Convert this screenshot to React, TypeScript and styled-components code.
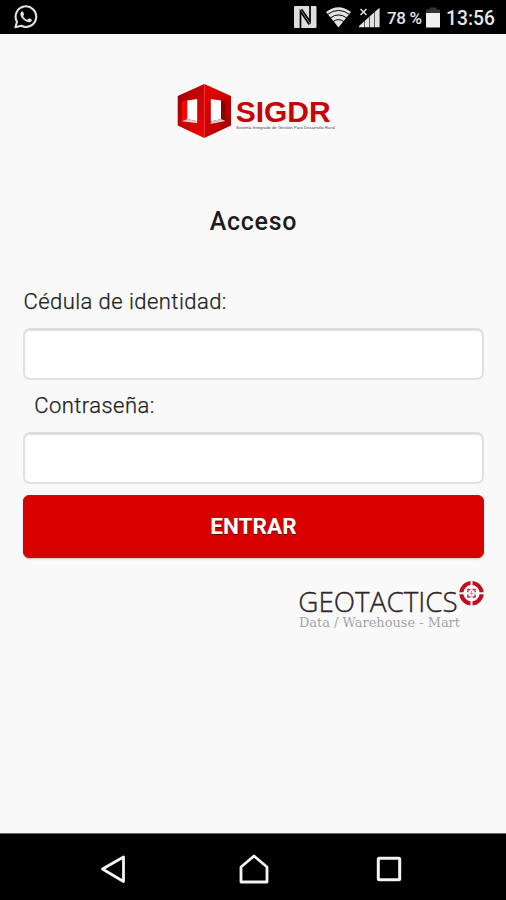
import React from "react";
import styled, { createGlobalStyle } from "styled-components";

const GlobalStyle = createGlobalStyle`
  *, *::before, *::after { box-sizing: border-box; }
  body { margin: 0; background: #f9f9f9; }
`;

const Screen = styled.div`
  display: flex;
  flex-direction: column;
  width: 506px;
  height: 900px;
  overflow: hidden;
  background: #f9f9f9;
  color: #222;
  font-family: Roboto, "Liberation Sans", sans-serif;
`;

const StatusBar = styled.header`
  display: flex;
  align-items: center;
  justify-content: space-between;
  height: 34px;
  padding: 0 11px 0 14px;
  background: #000;
  color: #e6e6e6;
`;

const StatusGroup = styled.div`
  display: flex;
  align-items: center;
`;

const Icon = styled.svg<{ $gap?: number }>`
  display: block;
  flex: none;
  margin-right: ${(p) => p.$gap ?? 0}px;
`;

const BatteryLevel = styled.span`
  width: 39px;
  font-size: 17px;
  font-weight: 500;
  line-height: 34px;
  letter-spacing: -0.35px;
  white-space: nowrap;
  padding-top: 2px;
`;

const Clock = styled.time`
  width: 48px;
  font-size: 19.3px;
  font-weight: 500;
  line-height: 34px;
  letter-spacing: 0;
  margin-left: -1px;
  margin-right: 1px;
  padding-top: 3px;
`;

const Main = styled.main`
  display: flex;
  flex-direction: column;
  flex: 1;
  padding: 47px 22px 0 23px;
`;

const Logo = styled.svg`
  display: block;
  align-self: center;
  margin-left: 6px;
`;

const Title = styled.h1`
  margin: 61px 0 0;
  text-align: center;
  font-size: 25px;
  font-weight: 500;
  line-height: 40px;
  letter-spacing: 0.7px;
  color: #1c1c1c;
`;

const Form = styled.form`
  display: flex;
  flex-direction: column;
  margin-top: 44px;
`;

const Label = styled.label<{ $indent?: number }>`
  height: 42px;
  padding-left: ${(p) => p.$indent ?? 0.4}px;
  font-size: 22px;
  line-height: 32px;
  letter-spacing: 0.45px;
  font-weight: 300;
  -webkit-text-stroke: 0.25px #222;
`;

const Input = styled.input`
  height: 52px;
  margin-bottom: 10px;
  padding: 0 12px;
  border: 2px solid #e0e0e0;
  border-top-color: #dcdcdc;
  border-radius: 7px;
  background: #fff;
  box-shadow: inset 0 1px 1px #e2e2e2;
  font: inherit;
  font-size: 22px;
  outline: none;
`;

const Submit = styled.button`
  height: 63px;
  margin-top: 1px;
  border: 1px solid #c90b0b;
  border-radius: 6px;
  background: #d80000;
  box-shadow: 0 1px 2px rgba(0, 0, 0, 0.22);
  color: #fff;
  font-family: inherit;
  font-size: 22.5px;
  font-weight: 700;
  letter-spacing: 0.1px;
  padding: 0 6px 2px;
  text-shadow: 0 1px 1px rgba(50, 0, 0, 0.65);
`;

const VendorLogo = styled.svg`
  display: block;
  align-self: flex-end;
  margin: 18px -1px 0 0;
`;

const NavBar = styled.nav`
  display: flex;
  align-items: center;
  justify-content: space-between;
  height: 67px;
  padding: 3px 104px 0 100px;
  border-top: 1px solid #666;
  background: #000;
`;

const HomeIcon = styled(Icon)`
  margin-left: 5px;
`;

const WhatsAppIcon = () => (
  <Icon width="24" height="24" viewBox="0 0 24 24" fill="none">
    <path
      d="M1.4 22.3 3 16.8A10.3 10.3 0 1 1 7.2 20.8Z"
      stroke="#e2e2e2"
      strokeWidth="2.1"
      strokeLinejoin="round"
    />
    <path
      d="M8.2 6.3c-.5 0-1.8 1-1.8 2.7 0 3.8 5.1 8.2 8.9 8.2 1.4 0 2.6-1 2.7-2.1 0-.5-2.5-1.8-3-1.8-.6 0-1 1.5-1.6 1.5-1.2 0-3.9-2.4-4.3-3.9 0-.5 1-1 1-1.5S9 6.3 8.2 6.3Z"
      fill="#e2e2e2"
    />
  </Icon>
);

const NfcIcon = () => (
  <Icon $gap={9} width="23" height="22" viewBox="0 0 23 22">
    <rect width="22.5" height="22" rx="1" fill="#dedede" />
    <path
      d="M6.5 22V5.5L15.3 18.5M7.5 3.2 16 15.5V0"
      fill="none"
      stroke="#000"
      strokeWidth="1.7"
    />
  </Icon>
);

const WifiIcon = () => (
  <Icon $gap={8} width="25" height="21" viewBox="0 0 25 21">
    <path d="M0 5Q12.5-4.5 25 5L12.5 20.5Z" fill="#e2e2e2" />
    <g fill="none" stroke="#000" strokeWidth="1">
      <path d="M1.5 7.4q11-8 22 0" />
      <path d="M4.2 11q8.3-6.2 16.6 0" />
      <path d="M7 14.7q5.5-4.2 11 0" />
    </g>
  </Icon>
);

const SignalIcon = () => (
  <Icon $gap={7} width="21" height="21" viewBox="0 0 21 21">
    <path d="M0 20.3V19L5 14.5v5.8ZM5.6 20.3V14L10 10v10.3ZM10.6 20.3V9.5L15 5.5v14.8ZM15.6 20.3V5L20.6.8v19.5Z" fill="#e2e2e2" />
    <path d="m1.5 2 6 6m0-6-6 6" stroke="#e2e2e2" strokeWidth="1.5" />
  </Icon>
);

const BatteryIcon = () => (
  <Icon $gap={7} width="14" height="21" viewBox="0 0 14 21">
    <path d="M0 2.5h3.5V.5h7v2H14V7H0Z" fill="#343434" />
    <rect y="6" width="14" height="14.5" fill="#f0f0f0" />
  </Icon>
);

const SigdrLogo = () => (
  <Logo width="160" height="60" viewBox="177 81 160 60" role="img" aria-label="SIGDR">
    <defs>
      <linearGradient id="leftFace" x1="0" y1="0" x2="1" y2="1">
        <stop offset="0" stopColor="#940000" />
        <stop offset="0.5" stopColor="#c90303" />
        <stop offset="1" stopColor="#ef0505" />
      </linearGradient>
      <linearGradient id="rightFace" x1="0" y1="0" x2="1" y2="1">
        <stop offset="0" stopColor="#ed0000" />
        <stop offset="0.55" stopColor="#c80000" />
        <stop offset="1" stopColor="#920000" />
      </linearGradient>
    </defs>
    <path d="M177.7 96 204.3 84v54l-26.6-12.6Z" fill="url(#leftFace)" />
    <path d="M204.3 84 231 96v29.5L204.3 138Z" fill="url(#rightFace)" />
    <path d="M181.8 101.3 197.2 99v24.3l-15.4-2Z" fill="#f40808" />
    <path d="M187.3 100.5 197.2 99v22.2l-9.9-2.2Z" fill="#fff" />
    <path d="m181.8 121.3 5.5-2.3 9.9 2.2v2.1Z" fill="#dccaca" />
    <path d="m210.8 99 14.7 2.3v19.8l-14.7 2.9Z" fill="#8b0000" />
    <path d="m210.8 99 10.2 1.6V119l-10.2 2.4Z" fill="#fff" />
    <path d="m210.8 121.4 10.2-2.4 4.5 2.1-14.7 2.9Z" fill="#dccaca" />
    <text x="235.7" y="121.7" textLength="95" lengthAdjust="spacingAndGlyphs" fontFamily="Liberation Sans, sans-serif" fontWeight="700" fontSize="29.5" fill="#c60508">
      SIGDR
    </text>
    <text x="236" y="129.3" textLength="99" lengthAdjust="spacingAndGlyphs" fontFamily="Liberation Sans, sans-serif" fontSize="4.2" fill="#4a4a4a">
      Sistema Integrado de Gestión Para Desarrollo Rural
    </text>
  </Logo>
);

const GeotacticsLogo = () => (
  <VendorLogo width="187" height="56" viewBox="298 576 187 56" role="img" aria-label="Geotactics">
    <text x="298.3" y="611.5" textLength="159.5" lengthAdjust="spacingAndGlyphs" fontFamily="Open Sans, sans-serif" fontWeight="300" fontSize="27" fill="#302629" stroke="#302629" strokeWidth=".35">
      GEOTACTICS
    </text>
    <text x="299" y="626.5" textLength="161" lengthAdjust="spacingAndGlyphs" fontFamily="DejaVu Serif, serif" fontWeight="400" fontSize="12.2" fill="#a5a5a5">
      Data / Warehouse - Mart
    </text>
    <circle cx="471.5" cy="593.3" r="10.2" fill="none" stroke="#c30d20" strokeWidth="4" />
    <path d="M471.5 580v27M458 593.3h27" stroke="#f9f9f9" strokeWidth="2" />
    <g fill="none" stroke="#cc3846" strokeWidth="1.5">
      <path d="M467.9 592.2v-2.6h2.6M472.5 589.6h2.6v2.6M475.1 594.4v2.6h-2.6M470.5 597h-2.6v-2.6" />
    </g>
    <path d="M471.5 591v4.6M469.2 593.3h4.6" stroke="#dc7c86" strokeWidth=".8" />
  </VendorLogo>
);

export default function App() {
  return (
    <Screen>
      <GlobalStyle />
      <StatusBar>
        <WhatsAppIcon />
        <StatusGroup>
          <NfcIcon />
          <WifiIcon />
          <SignalIcon />
          <BatteryLevel>78 %</BatteryLevel>
          <BatteryIcon />
          <Clock>13:56</Clock>
        </StatusGroup>
      </StatusBar>
      <Main>
        <SigdrLogo />
        <Title>Acceso</Title>
        <Form onSubmit={(e) => e.preventDefault()}>
          <Label htmlFor="cedula">Cédula de identidad:</Label>
          <Input id="cedula" type="text" />
          <Label htmlFor="password" $indent={11.2}>Contraseña:</Label>
          <Input id="password" type="password" />
          <Submit type="submit">ENTRAR</Submit>
        </Form>
        <GeotacticsLogo />
      </Main>
      <NavBar>
        <Icon width="26" height="28" viewBox="0 0 26 28" fill="none" stroke="#f4f4f4" strokeWidth="2.8" strokeLinejoin="round">
          <path d="M2.5 14 23.5 2v24.5Z" />
        </Icon>
        <HomeIcon width="30" height="30" viewBox="0 0 30 30" fill="none" stroke="#f4f4f4" strokeWidth="2.8" strokeLinejoin="round">
          <path d="M2 13 15 2l13 11v15H2Z" />
        </HomeIcon>
        <Icon width="26" height="26" viewBox="0 0 26 26" fill="none" stroke="#f4f4f4" strokeWidth="3">
          <rect x="2.3" y="2.3" width="21.4" height="21.4" rx="1" />
        </Icon>
      </NavBar>
    </Screen>
  );
}
